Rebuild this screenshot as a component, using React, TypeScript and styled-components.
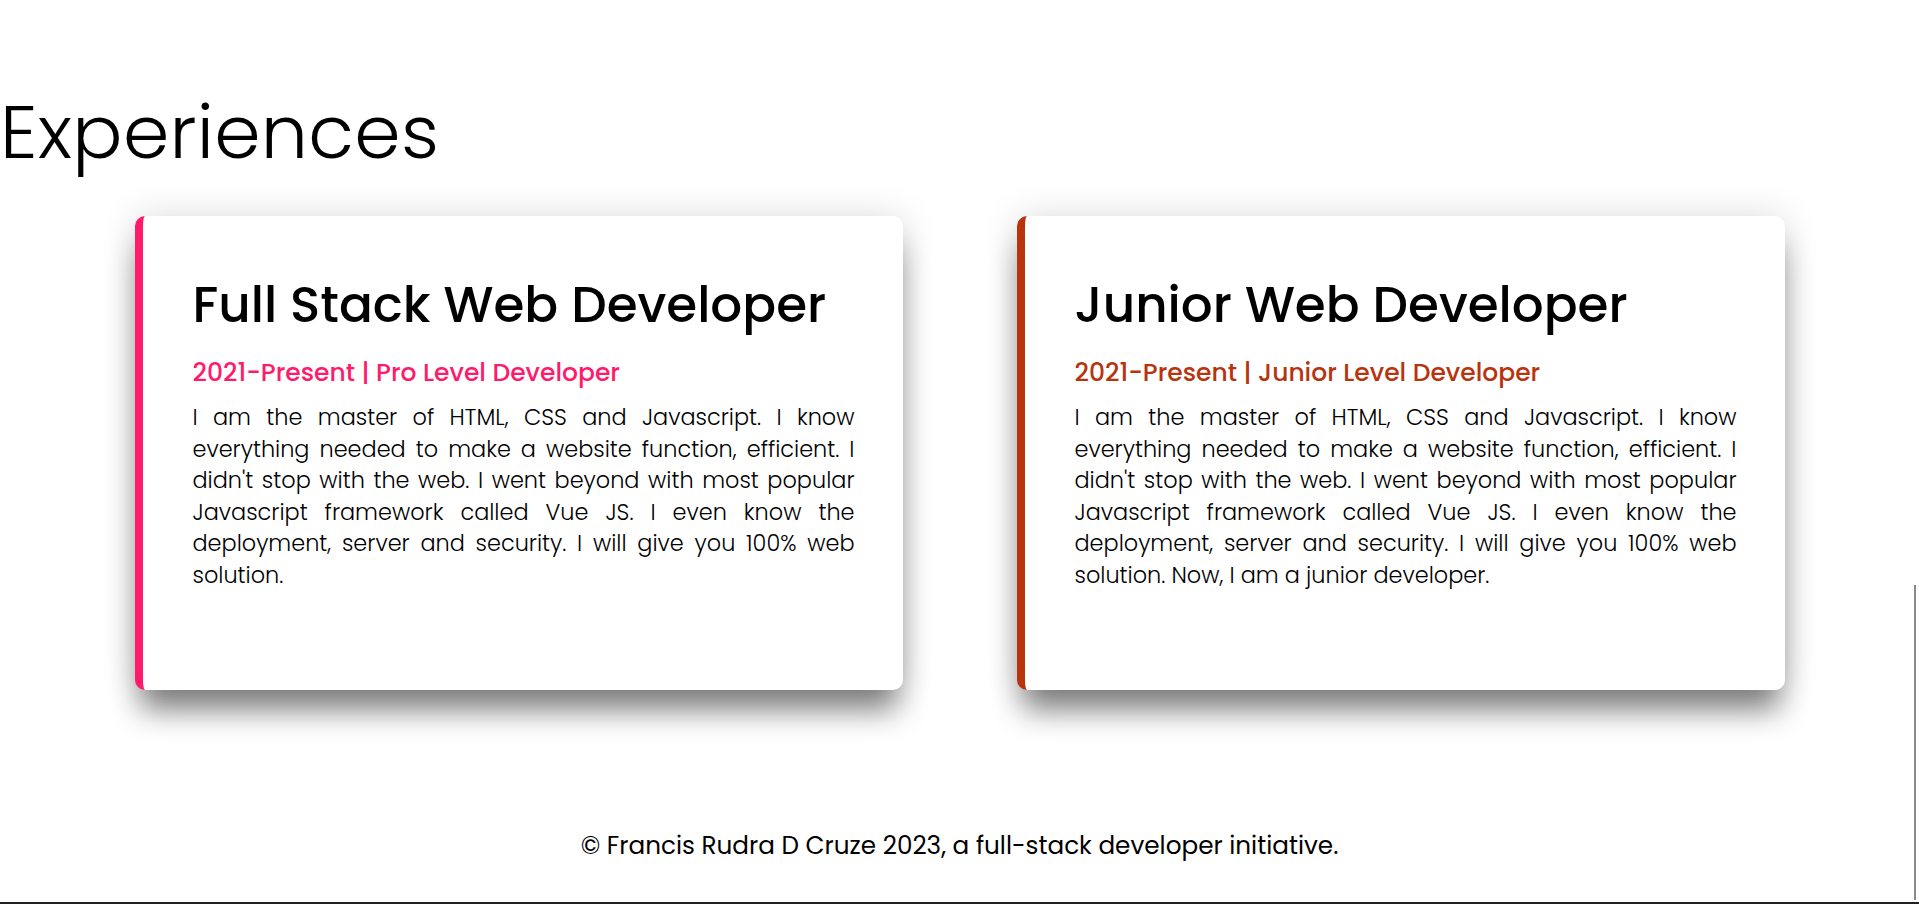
import React from "react";
import styled, { createGlobalStyle } from "styled-components";

const GlobalStyle = createGlobalStyle`
  html, body {
    margin: 0;
    padding: 0;
    background: #ffffff;
  }
  body {
    font-family: "Poppins", "Open Sans", "Liberation Sans", sans-serif;
    color: #000;
    overflow: hidden;
  }
  * { box-sizing: border-box; }
`;

interface Experience {
  title: string;
  period: string;
  accent: string;
  text: string;
}

const BASE_TEXT =
  "I am the master of HTML, CSS and Javascript. I know everything needed to make a website function, efficient. I didn't stop with the web. I went beyond with most popular Javascript framework called Vue JS. I even know the deployment, server and security. I will give you 100% web solution.";

const experiences: Experience[] = [
  {
    title: "Full Stack Web Developer",
    period: "2021-Present | Pro Level Developer",
    accent: "#ff1a6c",
    text: BASE_TEXT,
  },
  {
    title: "Junior Web Developer",
    period: "2021-Present | Junior Level Developer",
    accent: "#b7340e",
    text: BASE_TEXT + " Now, I am a junior developer.",
  },
];

const App: React.FC = () => {
  return (
    <>
      <GlobalStyle />
      <Page>
        <Section>
          <SectionTitle>Experiences</SectionTitle>
          <CardGrid>
            {experiences.map((exp) => (
              <Card key={exp.title} $accent={exp.accent}>
                <CardTitle>{exp.title}</CardTitle>
                <Period $accent={exp.accent}>{exp.period}</Period>
                <Description>{exp.text}</Description>
              </Card>
            ))}
          </CardGrid>
        </Section>
        <Footer>© Francis Rudra D Cruze 2023, a full-stack developer initiative.</Footer>
        <ScrollThumb />
      </Page>
    </>
  );
};

export default App;

// ---------------------------- styled components ---------------------------

const Page = styled.div`
  min-height: 904px;
  display: flex;
  flex-direction: column;
`;

const Section = styled.section`
  display: flex;
  flex-direction: column;
  padding-top: 88px;
`;

const SectionTitle = styled.h1`
  margin: 0;
  font-size: 74.5px;
  font-weight: 300;
  line-height: 88px;
  letter-spacing: 0.3px;
`;

const CardGrid = styled.div`
  display: grid;
  grid-template-columns: repeat(2, 768px);
  justify-content: center;
  column-gap: 114px;
  margin-top: 40px;
`;

const Card = styled.article<{ $accent: string }>`
  min-height: 474px;
  background: #fff;
  border-left: 8px solid ${({ $accent }) => $accent};
  border-radius: 10px;
  padding: 59px 48px 48px 50px;
  box-shadow: 0 26px 30px -6px rgba(0, 0, 0, 0.48),
    0 0 36px rgba(0, 0, 0, 0.14);
`;

const CardTitle = styled.h2`
  margin: 0;
  font-size: 50px;
  font-weight: 500;
  line-height: 60px;
`;

const Period = styled.h4<{ $accent: string }>`
  margin: 21px 0 0;
  font-size: 25px;
  font-weight: 500;
  line-height: 33px;
  color: ${({ $accent }) => $accent};
`;

const Description = styled.p`
  margin: 13px 0 0;
  font-size: 22.4px;
  font-weight: 300;
  line-height: 31.5px;
  text-align: justify;
`;

const Footer = styled.footer`
  margin-top: auto;
  padding: 0 0 40px;
  text-align: center;
  font-size: 24.7px;
  line-height: 33px;
  border-bottom: 2px solid #222;
`;

const ScrollThumb = styled.div`
  position: fixed;
  right: 3px;
  bottom: 4px;
  width: 2px;
  height: 315px;
  background: #8a8a8a;
`;
